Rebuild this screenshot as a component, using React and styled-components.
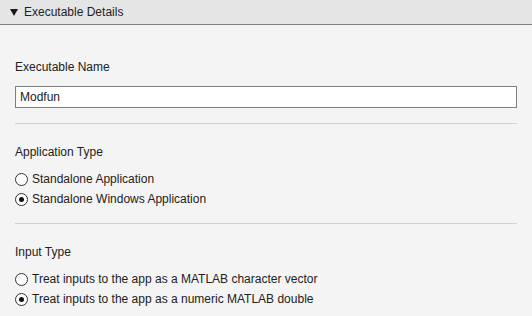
import React, { useState } from 'react';
import styled, { createGlobalStyle } from 'styled-components';

const GlobalStyle = createGlobalStyle`
  html, body {
    margin: 0;
    padding: 0;
    background: #f4f4f4;
    font-family: "Liberation Sans", Arial, sans-serif;
    font-size: 12px;
    color: #212121;
  }
`;

function App() {
  const [appType, setAppType] = useState('windows');
  const [inputType, setInputType] = useState('double');

  return (
    <Panel>
      <GlobalStyle />
      <Header>
        <Caret width="8" height="7" viewBox="0 0 8 7">
          <path d="M0 0 H8 L4 7 Z" fill="#1a1a1a" />
        </Caret>
        Executable Details
      </Header>
      <Body>
        <Section $top={34} $bottom={15}>
          <Label>Executable Name</Label>
          <NameInput defaultValue="Modfun" />
        </Section>
        <Section>
          <Label>Application Type</Label>
          <RadioList>
            <Radio
              label="Standalone Application"
              checked={appType === 'standalone'}
              onSelect={() => setAppType('standalone')}
            />
            <Radio
              label="Standalone Windows Application"
              checked={appType === 'windows'}
              onSelect={() => setAppType('windows')}
            />
          </RadioList>
        </Section>
        <Section $last>
          <Label>Input Type</Label>
          <RadioList>
            <Radio
              label="Treat inputs to the app as a MATLAB character vector"
              checked={inputType === 'char'}
              onSelect={() => setInputType('char')}
            />
            <Radio
              label="Treat inputs to the app as a numeric MATLAB double"
              checked={inputType === 'double'}
              onSelect={() => setInputType('double')}
            />
          </RadioList>
        </Section>
      </Body>
    </Panel>
  );
}

function Radio({ label, checked, onSelect }) {
  return (
    <RadioRow onClick={onSelect}>
      <Circle $checked={checked} />
      <span>{label}</span>
    </RadioRow>
  );
}

export default App;

const Panel = styled.div`
  width: 532px;
  min-height: 316px;
  background: #f4f4f4;
`;

const Header = styled.div`
  display: flex;
  align-items: center;
  gap: 6px;
  height: 24px;
  padding-left: 10px;
  background: #e5e5e5;
  border-bottom: 1px solid #808080;
  color: #1f1f1f;
`;

const Caret = styled.svg`
  display: block;
  margin-top: 1px;
`;

const Body = styled.div`
  padding: 0 15px;
`;

const Section = styled.div`
  padding-top: ${(p) => p.$top ?? 20}px;
  padding-bottom: ${(p) => p.$bottom ?? 14}px;
  border-bottom: ${(p) => (p.$last ? 'none' : '1px solid #d2d2d2')};
`;

const Label = styled.div`
  line-height: 16px;
  height: 16px;
`;

const NameInput = styled.input`
  display: block;
  box-sizing: border-box;
  width: 100%;
  height: 22px;
  margin-top: 11px;
  padding: 0 4px;
  border: 1px solid #7f7f7f;
  background: #fff;
  font-family: "Liberation Sans", Arial, sans-serif;
  font-size: 12px;
  color: #212121;
  outline: none;
`;

const RadioList = styled.div`
  display: flex;
  flex-direction: column;
  margin-top: 9px;
`;

const RadioRow = styled.label`
  display: flex;
  align-items: center;
  gap: 4px;
  height: 20px;
  cursor: pointer;
`;

const Circle = styled.span`
  position: relative;
  box-sizing: border-box;
  width: 13px;
  height: 13px;
  border: 1px solid #333;
  border-radius: 50%;
  background: #fff;
  flex-shrink: 0;

  &::after {
    content: '';
    display: ${(p) => (p.$checked ? 'block' : 'none')};
    position: absolute;
    left: 3px;
    top: 3px;
    width: 5px;
    height: 5px;
    border-radius: 50%;
    background: #111;
  }
`;
